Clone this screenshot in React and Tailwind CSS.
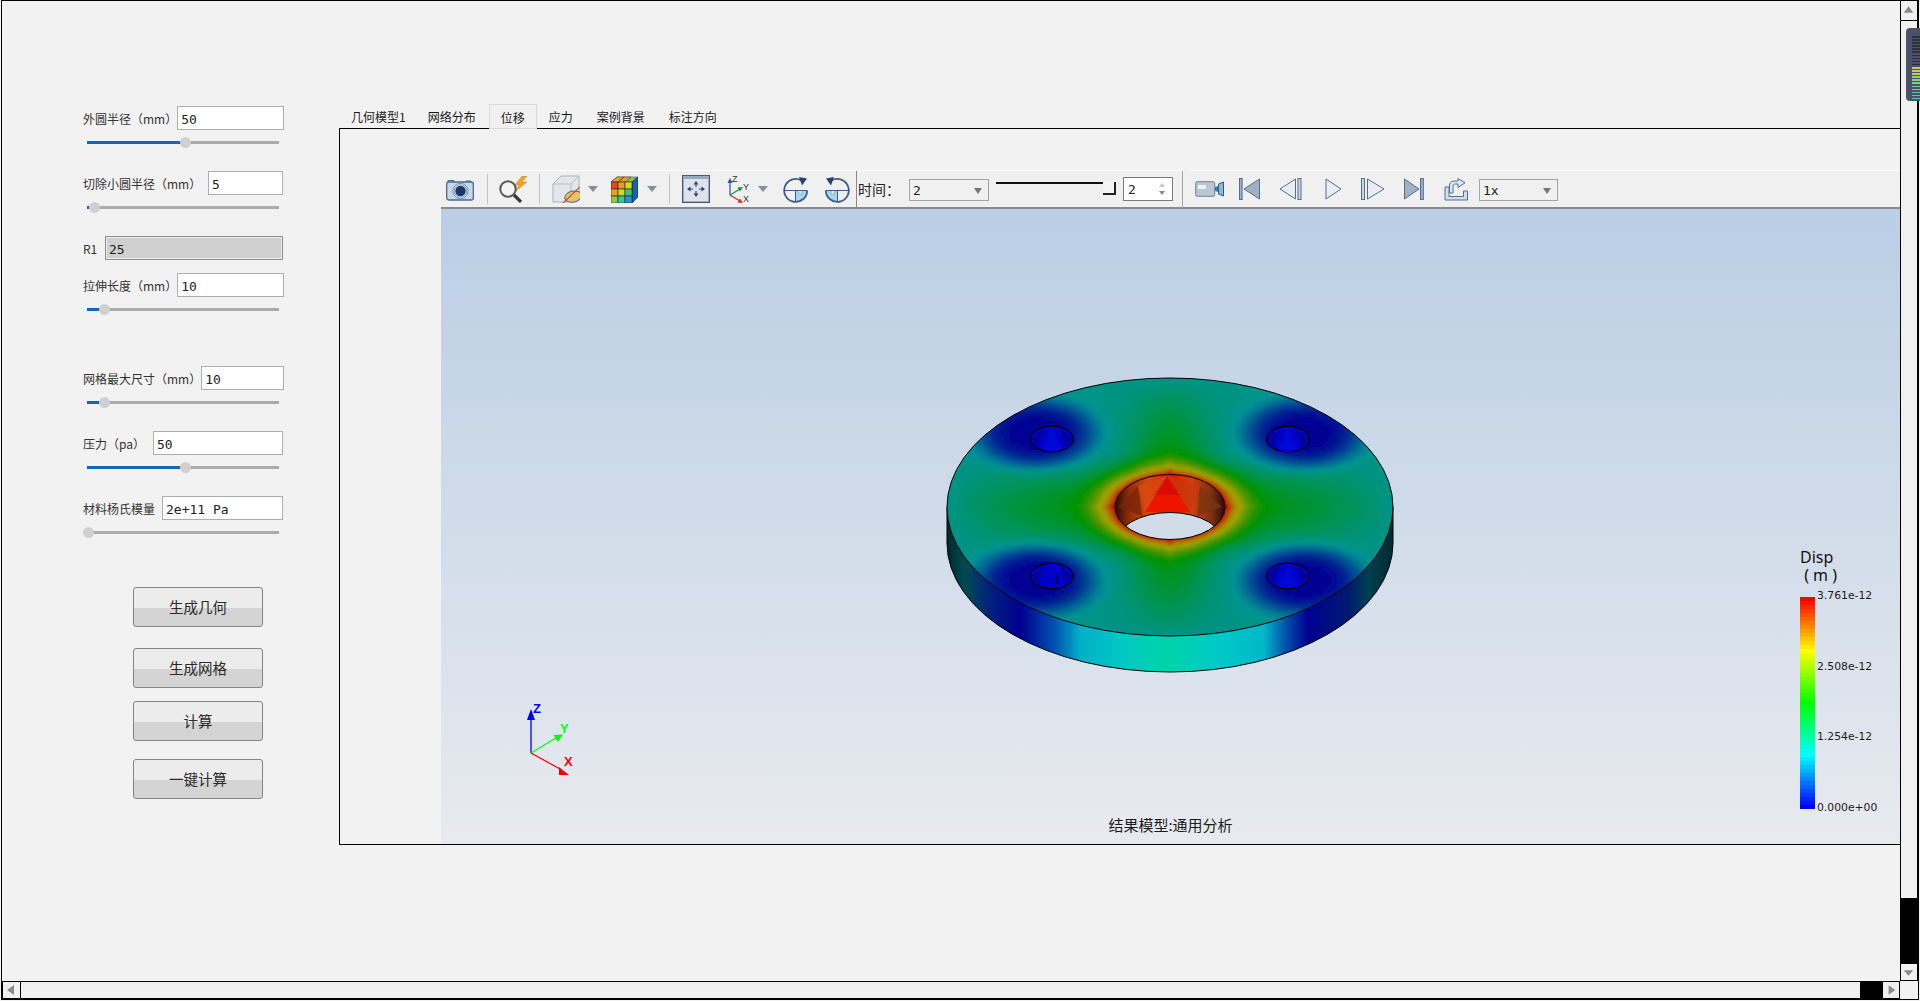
import React from "react";

const CJK = "font-['Noto_Sans_CJK_SC',sans-serif]";
const MONO = "font-['DejaVu_Sans_Mono','Noto_Sans_CJK_SC',monospace]";

function Slider({ pos }) {
  return (
    <div className="h-[41px] pt-[10px] pl-[4px]">
      <div className="relative h-[3px] w-[192px] mt-[1px] bg-[#ababab]">
        <div className="h-full bg-[#0f68b8]" style={{ width: pos }} />
        <div className="absolute top-[-4px] w-[11px] h-[11px] rounded-full bg-[#d0d0d0]" style={{ left: pos - 5 }} />
      </div>
    </div>
  );
}

function Field({ label, value, inputW, pos, disabled }) {
  return (
    <div>
      <div className="flex items-center justify-between h-6">
        <span className={`${CJK} pt-px text-[12px] text-[#333] whitespace-pre`}>{label}</span>
        <input
          readOnly
          value={value}
          style={{ width: inputW }}
          className={`h-6 px-[3px] pt-[2px] outline-none ${MONO} text-[13px] text-[#222] border ${
            disabled
              ? "bg-[#d0d0d0] border-[#8c8c8c] shadow-[inset_0_0_0_1px_#ececec]"
              : "bg-white border-[#adadad]"
          }`}
        />
      </div>
      {pos !== undefined && <Slider pos={pos} />}
    </div>
  );
}

function PushButton({ children, className = "" }) {
  return (
    <button
      className={`block w-[130px] h-10 pb-px ${className} border border-[#858585] rounded-[3px] bg-[linear-gradient(#ececec_0%,#ececec_52%,#d4d4d4_52%,#d4d4d4_100%)] ${CJK} text-[14.5px] text-[#2a2a2a]`}
    >
      {children}
    </button>
  );
}

function Sidebar() {
  return (
    <div className="w-[337px] shrink-0 pt-[105px] pl-[81px]">
      <div className="w-[200px]">
        <Field label="外圆半径（mm）" value="50" inputW={107} pos={98} />
        <Field label="切除小圆半径（mm）" value="5" inputW={75} pos={7} />
        <div className="mb-[13px]">
          <Field label="R1" value="25" inputW={178} disabled />
        </div>
        <div className="mb-[28px]">
          <Field label="拉伸长度（mm）" value="10" inputW={107} pos={17} />
        </div>
        <Field label="网格最大尺寸（mm）" value="10" inputW={83} pos={17} />
        <Field label="压力（pa）" value="50" inputW={130} pos={98} />
        <Field label="材料杨氏模量" value="2e+11 Pa" inputW={121} pos={1} />
      </div>
      <div className="ml-[50px] mt-[26px]">
        <PushButton>生成几何</PushButton>
        <PushButton className="mt-[21px]">生成网格</PushButton>
        <PushButton className="mt-[13px]">计算</PushButton>
        <PushButton className="mt-[18px]">一键计算</PushButton>
      </div>
    </div>
  );
}

function Tabs() {
  const tabs = ["几何模型1", "网络分布", "位移", "应力", "案例背景", "标注方向"];
  return (
    <div className="flex h-6 items-stretch">
      {tabs.map((t, i) => (
        <div
          key={t}
          className={`${i === 0 ? "pl-3 pr-[10px]" : "px-3"} ${CJK} text-[12px] leading-[26px] text-[#1a1a1a] ${
            t === "位移" ? "relative z-10 h-[25px] px-[11px] border border-[#d9d9d9] bg-[#f0f0f0] ml-[1px]" : ""
          }`}
        >
          {t}
        </div>
      ))}
    </div>
  );
}

const Sep = ({ ml }) => <div className="w-px h-[30px] bg-[#c4c4c4] shrink-0" style={{ marginLeft: ml }} />;

const Drop = ({ ml }) => (
  <svg width="10" height="6" className="shrink-0" style={{ marginLeft: ml }}>
    <path d="M0 0H10L5 6Z" fill="#8a8f96" />
  </svg>
);

function Select({ value, w, ml }) {
  return (
    <div
      className={`h-[22px] mt-[2px] pt-[2px] shrink-0 flex items-center justify-between pl-[3px] pr-[5px] border border-[#a3a3a3] bg-[#f0f0f0] ${MONO} text-[13px] text-[#222]`}
      style={{ width: w, marginLeft: ml }}
    >
      <span>{value}</span>
      <svg width="10" height="6">
        <path d="M1 0H9L5 6Z" fill="#777" />
      </svg>
    </div>
  );
}

const s = "#4a6a90";

const IconCamera = (p) => (
  <svg width="28" height="23" viewBox="0 0 28 23" className="shrink-0" {...p}>
    <path d="M2 4V2.5H8V4M20 4V3H25V4" fill="#c4d2e2" stroke={s} />
    <rect x="0.7" y="4" width="26.6" height="18" rx="2" fill="#c8d6e6" stroke={s} strokeWidth="1.3" />
    <circle cx="14.5" cy="13" r="7.6" fill="#e6edf5" stroke="#6f8db0" />
    <circle cx="14.5" cy="13" r="5.2" fill="#1b3566" />
    <circle cx="14.5" cy="13" r="6.2" fill="none" stroke="#7d9cc0" />
  </svg>
);
const IconMag = (p) => (
  <svg width="30" height="27" viewBox="0 0 30 27" className="shrink-0" {...p}>
    <path d="M24 0L17 9H21L18 15L29 6H24L29 0Z" fill="#eea52c" stroke="#c9801a" strokeWidth="0.5" />
    <circle cx="10" cy="13" r="7.7" fill="#f4f4f4" stroke="#5a5a5a" strokeWidth="2" />
    <path d="M16 19L23 26" stroke="#3a3a3a" strokeWidth="3.2" />
  </svg>
);
const IconBox = (p) => (
  <svg width="28" height="28" viewBox="0 0 28 28" className="shrink-0" {...p}>
    <path d="M1 9L9 1H27V19L19 27H1Z" fill="#e3e6ea" stroke="#aab3bd" />
    <path d="M1 9H19V27M19 9L27 1" fill="none" stroke="#b7bfc8" />
    <ellipse cx="21" cy="22" rx="8.5" ry="5.5" transform="rotate(-12 19 21)" fill="#e3c46a" stroke="#55657c" />
    <path d="M11 28L28 12" stroke="#c9541f" strokeWidth="1.2" />
  </svg>
);
const IconCube = (p) => {
  const cols = [
    ["#e8452a", "#ef9a1f", "#d8d820"],
    ["#f0a020", "#c8dc28", "#3fc86a"],
    ["#88cc44", "#38c8a0", "#2a90d8"],
  ];
  return (
    <svg width="27" height="27" viewBox="0 0 27 27" className="shrink-0" {...p}>
      <path d="M0 6L6 1H27L21 6Z" fill="#7ec850" stroke="#334" strokeWidth="0.5" />
      <path d="M6 1H13L7 6H0ZM13 1H20L14 6H7Z" fill="#e8a020" stroke="#333" strokeWidth="0.5" />
      <path d="M21 6L27 1V21L21 27Z" fill="#1b5fb0" stroke="#123" strokeWidth="0.6" />
      {cols.map((r, y) =>
        r.map((c, x) => <rect key={`${x}${y}`} x={x * 7} y={6 + y * 7} width="7" height="7" fill={c} stroke="#222" strokeWidth="0.6" />)
      )}
    </svg>
  );
};
const IconPan = (p) => (
  <svg width="28" height="28" viewBox="0 0 28 28" className="shrink-0" {...p}>
    <rect x="0.7" y="0.7" width="26.6" height="26.6" fill="#dfe3e9" stroke="#3f5d84" strokeWidth="1.4" />
    <rect x="1" y="1" width="26" height="3" fill="#98abc3" />
    <g fill="#2d4a70" stroke="#2d4a70">
      <path d="M14 8V12M14 16V20M7 14H11M17 14H21" strokeWidth="1.2" />
      <path d="M14 6L11.5 9.5H16.5ZM14 22L11.5 18.5H16.5ZM5 14L8.5 11.5V16.5ZM23 14L19.5 11.5V16.5Z" stroke="none" />
    </g>
  </svg>
);
const IconAxes = (p) => (
  <svg width="23" height="28" viewBox="0 0 23 28" className="shrink-0" {...p}>
    <path d="M3 20V6" stroke="#2a4fa8" strokeWidth="1.2" />
    <path d="M3 3L0.5 8H5.5Z" fill="#2a4fa8" />
    <path d="M3 20L13 14" stroke="#18923c" strokeWidth="1.2" />
    <path d="M16 12L10.5 12.5L13 16.5Z" fill="#18923c" />
    <path d="M3 20L13 26" stroke="#e02828" strokeWidth="1.2" />
    <path d="M16 28L10.5 27.5L13 23.5Z" fill="#e02828" />
    <text x="5" y="7" fontSize="9" fontFamily="Liberation Sans" fill="#333">Z</text>
    <text x="16" y="15" fontSize="9" fontFamily="Liberation Sans" fill="#333">Y</text>
    <text x="16" y="27" fontSize="9" fontFamily="Liberation Sans" fill="#333">X</text>
  </svg>
);
const IconRotate = ({ flip, ...p }) => (
  <svg width="27" height="27" viewBox="0 0 27 27" className="shrink-0" {...p}>
    <g transform={flip ? "translate(27 0) scale(-1 1)" : undefined}>
      <path d="M13.5 14.5V26A11.5 11.5 0 0 0 25.2 14.5Z" fill="#a6d5f0" />
      <path d="M16.5 14.5H20V18H16.5Z" fill="#e4f2fb" stroke="#5e93bd" strokeWidth="0.6" />
      <path d="M19.5 4.5A11.5 11.5 0 1 0 25.2 14.5" fill="none" stroke="#3f5d84" strokeWidth="1.8" />
      <path d="M1.8 14.5H25.2M13.5 14.5V26" stroke="#3f5d84" strokeWidth="1" />
      <path d="M17 1L25 2.5L20 9.5Z" fill="#24426c" />
    </g>
  </svg>
);
const IconVideo = (p) => (
  <svg width="29" height="16" viewBox="0 0 29 16" className="shrink-0" {...p}>
    <rect x="0.7" y="0.7" width="19" height="14.6" rx="1.5" fill="#bcc6d2" stroke="#6a84a3" />
    <rect x="3" y="4" width="8" height="4" fill="#f0f2f5" />
    <path d="M20 6L23 5V11L20 10Z" fill="#2f7fb0" />
    <path d="M23.5 3L28.5 1V15L23.5 13Z" fill="#8fb6d0" stroke="#2c5d8a" />
  </svg>
);
const lt = "#e9edf2";
const dk = "#a3b0c0";
const bs = "#4f6f96";
const IconFirst = (p) => (
  <svg width="21" height="22" viewBox="0 0 21 22" className="shrink-0" {...p}>
    <rect x="0.5" y="0.5" width="2.6" height="21" fill={dk} stroke={bs} />
    <path d="M20.5 1L5 11L20.5 21Z" fill={dk} stroke={bs} />
  </svg>
);
const IconPrev = (p) => (
  <svg width="23" height="22" viewBox="0 0 23 22" className="shrink-0" {...p}>
    <path d="M16.5 1L1 11L16.5 21Z" fill={lt} stroke={bs} />
    <rect x="19" y="0.5" width="3" height="21" fill="#ccd4de" stroke={bs} />
  </svg>
);
const IconPlay = (p) => (
  <svg width="17" height="22" viewBox="0 0 17 22" className="shrink-0" {...p}>
    <path d="M1 1L16 11L1 21Z" fill={lt} stroke={bs} />
  </svg>
);
const IconNext = (p) => (
  <svg width="24" height="22" viewBox="0 0 24 22" className="shrink-0" {...p}>
    <rect x="0.5" y="0.5" width="3" height="21" fill="#ccd4de" stroke={bs} />
    <path d="M6.5 1L23 11L6.5 21Z" fill={lt} stroke={bs} />
  </svg>
);
const IconLast = (p) => (
  <svg width="20" height="22" viewBox="0 0 20 22" className="shrink-0" {...p}>
    <path d="M0.5 1L15 11L0.5 21Z" fill={dk} stroke={bs} />
    <rect x="16.5" y="0.5" width="2.8" height="21" fill={dk} stroke={bs} />
  </svg>
);
const IconExport = (p) => (
  <svg width="24" height="23" viewBox="0 0 24 23" className="shrink-0" {...p}>
    <path d="M1 9H5V18.5H19.5V13H23.5V22H1Z" fill="#d5dde6" stroke={bs} />
    <path d="M9 15V8C9 6.5 10 6 11.5 6H14V9.5L21 4.8L14 0.5V3H10C7 3 5.5 5 5.5 8V15Z" fill="#dfe6ee" stroke={bs} />
  </svg>
);

function Toolbar() {
  return (
    <div className="h-[39px] flex shrink-0 bg-[#f0f0f0] border-b-2 border-b-[#8a8a8a]">
      <div className="w-[742px] flex items-center border-t border-white shrink-0">
        <IconCamera style={{ marginLeft: 5 }} />
        <Sep ml={13} />
        <IconMag style={{ marginLeft: 10 }} />
        <Sep ml={11} />
        <IconBox style={{ marginLeft: 12 }} />
        <Drop ml={8} />
        <IconCube style={{ marginLeft: 13 }} />
        <Drop ml={9} />
        <Sep ml={12} />
        <IconPan style={{ marginLeft: 12 }} />
        <IconAxes style={{ marginLeft: 17 }} />
        <Drop ml={8} />
        <IconRotate style={{ marginLeft: 14 }} />
        <IconRotate flip style={{ marginLeft: 15 }} />
        <div className="w-px h-[37px] bg-[#8a8a8a] ml-[5px] shrink-0" />
        <div className={`w-[52px] shrink-0 pl-px ${CJK} text-[14px] text-[#222]`}>时间：</div>
        <Select value="2" w={80} />
        <div className="relative w-[120px] h-[19px] mt-[2px] ml-[7px] shrink-0">
          <div className="absolute top-[1px] left-0 right-0 h-[2px] bg-[#111]" />
          <div className="absolute top-[1px] right-0 w-[13px] h-[13px] bg-[#f4f4f4] border-r-2 border-b-2 border-[#222]" />
        </div>
        <div className={`relative w-[50px] h-6 ml-[7px] shrink-0 pl-[4px] pt-[2px] flex items-center bg-white border border-[#7a7a7a] ${MONO} text-[13px] text-[#222]`}>
          2
          <svg width="8" height="14" className="absolute right-[6px] top-[4px]">
            <path d="M1 5L4 1L7 5Z" fill="#c4c4c4" />
            <path d="M1 9H7L4 13Z" fill="#8a8a8a" />
          </svg>
        </div>
        <div className="w-px h-[37px] bg-[#a8a8a8] ml-[9px] shrink-0" />
      </div>
      <div className="flex-1 flex items-center border-t border-white ml-[7px]">
        <IconVideo style={{ marginLeft: 5 }} />
        <IconFirst style={{ marginLeft: 15 }} />
        <IconPrev style={{ marginLeft: 19 }} />
        <IconPlay style={{ marginLeft: 23 }} />
        <IconNext style={{ marginLeft: 19 }} />
        <IconLast style={{ marginLeft: 19 }} />
        <IconExport style={{ marginLeft: 20 }} />
        <Select value="1x" w={79} ml={11} />
      </div>
    </div>
  );
}

const CX = 1170;
const CY = 507;
const RX = 223;
const RY = 129;
const holes = [
  [1052, 439],
  [1288, 439],
  [1052, 576],
  [1288, 576],
];

function jet(t) {
  const c = (v) => Math.round(255 * Math.max(0, Math.min(1, v)));
  const r = c(t < 0.5 ? 0 : t < 0.75 ? (t - 0.5) * 4 : 1);
  const g = c(t < 0.25 ? t * 4 : t < 0.75 ? 1 : (1 - t) * 4);
  const b = c(t < 0.25 ? 1 : t < 0.5 ? (0.5 - t) * 4 : 0);
  return [r, g, b];
}

function field(u, w) {
  const r = Math.hypot(u, w);
  const axis = Math.max(Math.exp(-((w / 0.28) ** 2)), Math.exp(-((u / 0.18) ** 2)));
  const base = 0.27 + 0.23 * axis * Math.max(0, 1 - r * r);
  const d = Math.abs(u) + Math.abs(w);
  const m = Math.max(0, Math.min(d - 0.27, r - 0.25));
  const center = 0.62 * Math.exp(-((m / 0.12) ** 2)) + 0.38 * Math.exp(-m / 0.02);
  const v = base + (1 - base) * center;
  const db = Math.hypot(Math.abs(u) - 0.6, Math.abs(w) - 0.57);
  const k = Math.exp(-((db / 0.26) ** 4));
  return v * (1 - k);
}

const LEVELS = 120;
const CELL = 3;
const facePaths = (() => {
  const buckets = Array.from({ length: LEVELS + 1 }, () => []);
  for (let y = CY - RY - 9; y < CY + RY + 9; y += CELL) {
    for (let x = CX - RX - 12; x < CX + RX + 12; x += CELL) {
      const u = (x + 1.5 - CX) / RX;
      const w = (y + 1.5 - CY) / RY;
      if (u * u + w * w > 1.25) continue;
      const lvl = Math.round(Math.min(1, Math.max(0, field(u, w))) * LEVELS);
      buckets[lvl].push(`M${x} ${y}h${CELL}v${CELL}h-${CELL}z`);
    }
  }
  return buckets
    .map((cells, lvl) => {
      if (!cells.length) return null;
      const t = lvl / LEVELS;
      const br = t < 0.6 ? 0.575 : 0.575 + (0.18 * (t - 0.6)) / 0.4;
      const [r, g, b] = jet(t);
      return { d: cells.join(""), fill: `rgb(${Math.round(r * br)},${Math.round(g * br)},${Math.round(b * br)})` };
    })
    .filter(Boolean);
})();

function Model() {
  return (
    <g>
      <defs>
        <clipPath id="topClip">
          <ellipse cx={CX} cy={CY} rx={RX} ry={RY} />
        </clipPath>
        <clipPath id="holeClip">
          <ellipse cx={CX} cy={CY} rx="55" ry="32.5" />
        </clipPath>
        <filter id="soft" filterUnits="userSpaceOnUse" x="930" y="360" width="480" height="300">
          <feGaussianBlur stdDeviation="1.6" />
        </filter>
        <linearGradient id="side" gradientUnits="userSpaceOnUse" x1="947" x2="1393" y1="0" y2="0">
          <stop offset="0" stopColor="#002a2c" />
          <stop offset="0.04" stopColor="#004a50" />
          <stop offset="0.09" stopColor="#00257a" />
          <stop offset="0.165" stopColor="#000090" />
          <stop offset="0.24" stopColor="#0050b0" />
          <stop offset="0.3" stopColor="#00b0c8" />
          <stop offset="0.39" stopColor="#00c8c4" />
          <stop offset="0.495" stopColor="#00d4a8" />
          <stop offset="0.61" stopColor="#00c8c8" />
          <stop offset="0.71" stopColor="#00b8c8" />
          <stop offset="0.76" stopColor="#0050a8" />
          <stop offset="0.81" stopColor="#000090" />
          <stop offset="0.9" stopColor="#001a70" />
          <stop offset="0.945" stopColor="#004050" />
          <stop offset="1" stopColor="#002a30" />
        </linearGradient>
        <linearGradient id="wall" gradientUnits="userSpaceOnUse" x1="1115" x2="1225" y1="0" y2="0">
          <stop offset="0" stopColor="#2a0c08" />
          <stop offset="0.12" stopColor="#8a2c08" />
          <stop offset="0.3" stopColor="#d84808" />
          <stop offset="0.5" stopColor="#e01a00" />
          <stop offset="0.7" stopColor="#d04008" />
          <stop offset="0.88" stopColor="#7a3010" />
          <stop offset="1" stopColor="#2a0c08" />
        </linearGradient>
      </defs>
      <path
        d={`M${CX - RX} ${CY}V${CY + 36}A${RX} ${RY} 0 0 0 ${CX + RX} ${CY + 36}V${CY}Z`}
        fill="url(#side)"
        stroke="#000"
      />
      <g clipPath="url(#topClip)">
        <g filter="url(#soft)" shapeRendering="crispEdges">
          {facePaths.map((p, i) => (
            <path key={i} d={p.d} fill={p.fill} />
          ))}
        </g>
      </g>
      <ellipse cx={CX} cy={CY} rx={RX} ry={RY} fill="none" stroke="#000" />
      {holes.map(([x, y], i) => (
        <g key={i}>
          <ellipse cx={x} cy={y} rx="21.5" ry="12.8" fill="#0000c8" stroke="#000" />
          <path d={`M${x - 21} ${y}L${x - 14} ${y + 9}L${x - 8} ${y - 11}Z M${x + 21} ${y}L${x + 14} ${y + 9}L${x + 8} ${y - 11}Z`} fill="#000090" opacity="0.75" />
          {i !== 2 && <path d={`M${x} ${y - 12}L${x - 10} ${y + 12}H${x + 10}Z`} fill="#0008d8" />}
          {i === 2 && <path d={`M${x + 5} ${y - 1}V${y + 8}`} stroke="#000" />}
          <ellipse cx={x} cy={y} rx="21.5" ry="12.8" fill="none" stroke="#000" />
        </g>
      ))}
      <g clipPath="url(#holeClip)">
        <rect x="1110" y="470" width="120" height="75" fill="url(#wall)" />
        <path d="M1167 476L1145 512H1190Z" fill="#ee1400" />
        <path d="M1167 476L1152 495H1183Z" fill="#d80c00" />
        <path d="M1118 507L1138 486L1142 516Z" fill="#7a2408" opacity="0.8" />
        <path d="M1222 507L1200 486L1197 516Z" fill="#7a3410" opacity="0.8" />
        <path d="M1138 486L1167 476L1145 512Z" fill="#d84a10" opacity="0.75" />
        <path d="M1200 486L1167 476L1190 512Z" fill="#c83810" opacity="0.75" />
        <ellipse cx={CX} cy="545" rx="55" ry="32.5" fill="#d0dce8" stroke="#000" />
      </g>
      <ellipse cx={CX} cy={CY} rx="55" ry="32.5" fill="none" stroke="#000" />
    </g>
  );
}

function Triad() {
  return (
    <g fontFamily="Liberation Sans" fontWeight="700" fontSize="13">
      <path d="M531 753V716" stroke="#0000ff" strokeWidth="1.3" />
      <path d="M531 709L527 720H535Z" fill="#0000ff" />
      <path d="M531 753L556 738" stroke="#00ff00" strokeWidth="1.3" />
      <path d="M563 734.5L553.5 735L558 742Z" fill="#00ff00" />
      <path d="M531 753L560 769" stroke="#ff0000" strokeWidth="1.3" />
      <path d="M569 775L559 767L559 775Z" fill="#ff0000" />
      <text x="533" y="713" fill="#0000ff">Z</text>
      <text x="560" y="733" fill="#00ff00">Y</text>
      <text x="564" y="766" fill="#ff0000">X</text>
    </g>
  );
}

function Legend() {
  const bands = Array.from({ length: 53 }, (_, i) => {
    const [r, g, b] = jet(1 - i / 52);
    return `rgb(${r},${g},${b})`;
  });
  const labels = ["3.761e-12", "2.508e-12", "1.254e-12", "0.000e+00"];
  return (
    <div className="absolute left-[1359px] top-[339px]">
      <div className="font-['Noto_Sans',sans-serif] text-[16px] leading-[18px] text-[#111]">Disp</div>
      <div className="font-['Noto_Sans',sans-serif] text-[16px] leading-[18px] text-[#111] whitespace-pre mb-[13px]"> ( m )</div>
      <div className="flex items-start h-[212px]">
        <div className="w-[15px] h-[212px] flex flex-col">
          {bands.map((c, i) => (
            <div key={i} className="flex-1" style={{ background: c }} />
          ))}
        </div>
        <div className="h-[226px] -mt-[8px] ml-[2px] flex flex-col justify-between font-['DejaVu_Sans',sans-serif] text-[10.8px] leading-[14px] text-[#1c1c1c]">
          {labels.map((l) => (
            <div key={l}>{l}</div>
          ))}
        </div>
      </div>
    </div>
  );
}

function Viewport() {
  return (
    <div className="relative flex-1 bg-[linear-gradient(#bacee4,#e8eaef)]">
      <svg width="1459" height="635" viewBox="441 209 1459 635" className="block">
        <Model />
        <Triad />
      </svg>
      <Legend />
      <div className={`absolute bottom-[9px] left-0 w-[1459px] text-center ${CJK} text-[15px] leading-5 text-[#1c1c1c]`}>
        结果模型:通用分析
      </div>
    </div>
  );
}

const Arrow = ({ d }) => (
  <svg width="17" height="17" viewBox="0 0 17 17">
    <path d={d} fill="#8a8a8a" />
  </svg>
);

function VScroll() {
  return (
    <div className="w-[18px] shrink-0 flex flex-col border-x border-b border-black bg-[#f0f0f0]">
      <div className="h-5 border-b border-black flex items-center justify-center">
        <Arrow d="M8 4L13 11H3Z" />
      </div>
      <div className="flex-1 flex flex-col justify-end">
        <div className="h-[66px] bg-black" />
      </div>
      <div className="h-4 flex items-center justify-center">
        <Arrow d="M3 6H13L8 12Z" />
      </div>
    </div>
  );
}

function HScroll() {
  return (
    <div className="flex h-[18px]">
      <div className="w-[1898px] flex border border-black bg-[#f0f0f0]">
        <div className="w-[18px] border-r border-black flex items-center justify-center">
          <Arrow d="M4 8L11 3V13Z" />
        </div>
        <div className="flex-1 flex justify-end">
          <div className="w-[23px] bg-black" />
        </div>
        <div className="w-4 flex items-center justify-center">
          <Arrow d="M13 8L6 3V13Z" />
        </div>
      </div>
    </div>
  );
}

function Widget() {
  const ticks = Array.from({ length: 21 }, (_, i) => i);
  const col = (i) =>
    i < 10 ? "#2c3040" : i < 13 ? "#c4cc58" : i < 15 ? "#9ccc68" : i < 18 ? "#70d090" : "#40d8a8";
  return (
    <div className="absolute left-[1906px] top-[28px] w-[14px] h-[73px] rounded-l-[4px] bg-[#4b5168] pt-[8px] pl-[6px] flex flex-col gap-[1.5px]">
      {ticks.map((i) => (
        <div key={i} className="h-[1.6px] w-[8px]" style={{ background: col(i) }} />
      ))}
    </div>
  );
}

export default function App() {
  return (
    <div className="relative w-[1920px] h-[1001px] overflow-hidden bg-[#f2f2f2]">
      <div className="ml-px w-[1918px] h-[1000px] border border-black flex flex-col">
        <div className="flex h-[980px]">
          <div className="w-[1898px] flex shrink-0">
            <Sidebar />
            <div className="flex-1 pt-[103px]">
              <Tabs />
              <div className="h-[717px] border-l border-t border-b border-black pt-[41px] pl-[101px]">
                <div className="flex flex-col h-[674px] w-[1459px]">
                  <Toolbar />
                  <Viewport />
                </div>
              </div>
            </div>
          </div>
          <VScroll />
        </div>
        <HScroll />
      </div>
      <Widget />
    </div>
  );
}
